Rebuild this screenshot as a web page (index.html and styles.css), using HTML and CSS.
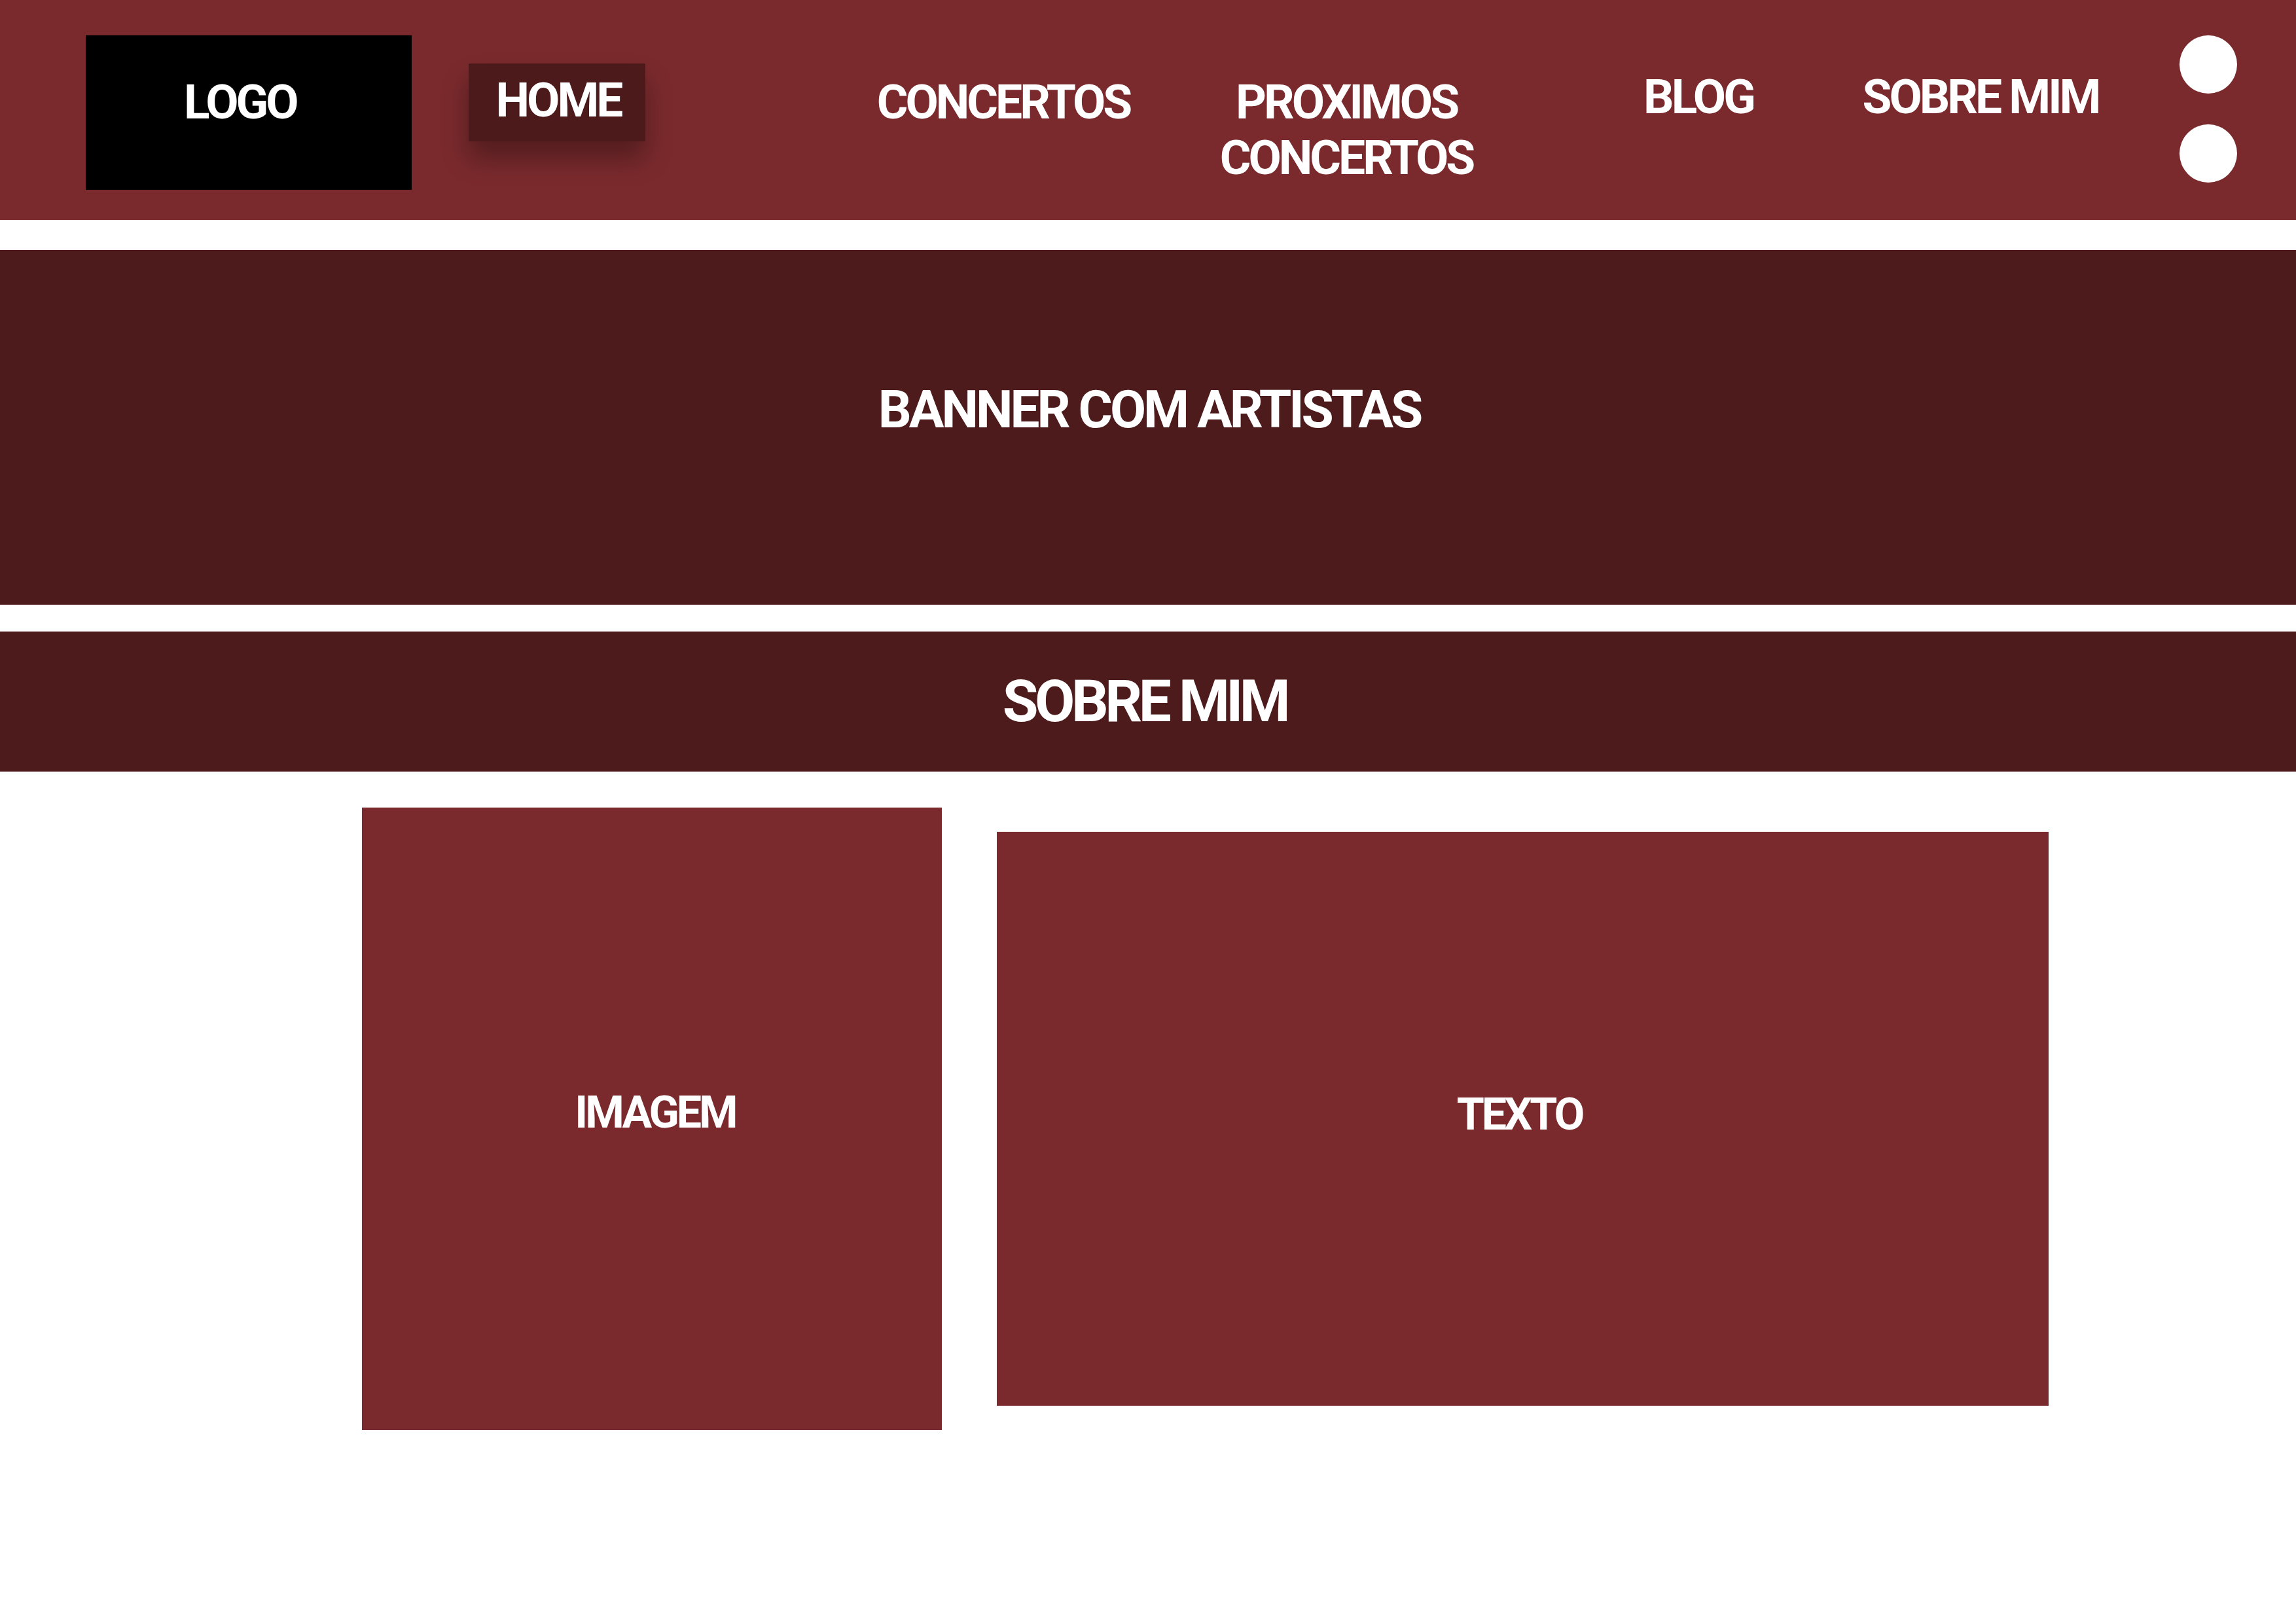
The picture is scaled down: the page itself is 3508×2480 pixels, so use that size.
FILE: index.html
```html
<!DOCTYPE html>
<html lang="pt">
<head>
<meta charset="utf-8">
<title>Wireframe</title>
<link rel="stylesheet" href="styles.css">
</head>
<body>
<header class="topbar">
  <div class="logo"><span>LOGO</span></div>
  <a class="nav-home" href="#">HOME</a>
  <nav class="nav">
    <a class="nav-item concertos" href="#">CONCERTOS</a>
    <a class="nav-item proximos" href="#">PROXIMOS<br>CONCERTOS</a>
    <a class="nav-item blog" href="#">BLOG</a>
    <a class="nav-item sobre" href="#">SOBRE MIM</a>
  </nav>
  <div class="dots">
    <span class="dot"></span>
    <span class="dot"></span>
  </div>
</header>

<section class="banner">
  <h1 class="banner-title">BANNER COM ARTISTAS</h1>
</section>

<section class="about-bar">
  <h2 class="about-title">SOBRE MIM</h2>
</section>

<section class="about">
  <div class="card card-image"><span>IMAGEM</span></div>
  <div class="card card-text"><span>TEXTO</span></div>
</section>
</body>
</html>
```

FILE: styles.css
```css
* {
  box-sizing: border-box;
}

html, body {
  margin: 0;
  padding: 0;
  background: #ffffff;
}

body {
  width: 3508px;
  min-height: 2480px;
  font-family: Roboto, "Liberation Sans", sans-serif;
  font-weight: 700;
  color: #ffffff;
}

a {
  color: #ffffff;
  text-decoration: none;
}

.topbar {
  height: 336px;
  background: #7a2a2d;
  display: flex;
  align-items: flex-start;
}

.logo {
  margin-top: 54px;
  margin-left: 131px;
  width: 498px;
  height: 236px;
  background: #000000;
  padding-top: 60px;
  padding-left: 150px;
  font-size: 73px;
  line-height: 85px;
  letter-spacing: -4px;
}

.nav-home {
  margin-top: 97px;
  margin-left: 87px;
  width: 270px;
  height: 119px;
  background: #4d1a1c;
  box-shadow: 0 26px 40px rgba(0, 0, 0, 0.32);
  text-align: center;
  font-size: 73px;
  line-height: 85px;
  padding-top: 14px;
  padding-left: 4px;
  letter-spacing: -4px;
}

.nav {
  display: flex;
  align-items: flex-start;
}

.nav-item {
  font-size: 73px;
  line-height: 85px;
  letter-spacing: -4px;
  text-align: center;
  white-space: nowrap;
  padding-left: 4px;
}

.concertos {
  width: 440px;
  margin-top: 114px;
  margin-left: 325px;
}

.proximos {
  width: 440px;
  margin-top: 114px;
  margin-left: 84px;
}

.blog {
  width: 300px;
  margin-top: 106px;
  margin-left: 168px;
}

.sobre {
  width: 440px;
  margin-top: 106px;
  margin-left: 61px;
}

.dots {
  margin-left: 86px;
  margin-top: 54px;
  display: flex;
  flex-direction: column;
  gap: 47px;
}

.dot {
  display: block;
  width: 88px;
  height: 89px;
  border-radius: 50%;
  background: #ffffff;
}

.banner {
  margin-top: 46px;
  height: 542px;
  background: #4d1b1c;
  padding-top: 199px;
}

.banner-title {
  margin: 0;
  text-align: center;
  font-size: 80px;
  line-height: 90px;
  font-weight: 700;
  letter-spacing: -4px;
  padding-left: 4px;
}

.about-bar {
  margin-top: 41px;
  height: 214px;
  background: #4d1b1c;
  display: flex;
  align-items: center;
  justify-content: center;
  padding-right: 10px;
}

.about-title {
  margin: 0;
  font-size: 89px;
  line-height: 100px;
  font-weight: 700;
  letter-spacing: -5.5px;
}

.about {
  display: flex;
  align-items: flex-start;
  padding-left: 553px;
  padding-top: 55px;
  gap: 84px;
}

.card {
  background: #7a2a2d;
  display: flex;
  align-items: center;
  justify-content: center;
  font-size: 68px;
  line-height: 80px;
  letter-spacing: -4px;
}

.card-image {
  width: 886px;
  height: 951px;
  padding-bottom: 20px;
  padding-left: 10px;
}

.card-text {
  margin-top: 37px;
  width: 1607px;
  height: 877px;
  padding-bottom: 13px;
  padding-right: 10px;
}
```
